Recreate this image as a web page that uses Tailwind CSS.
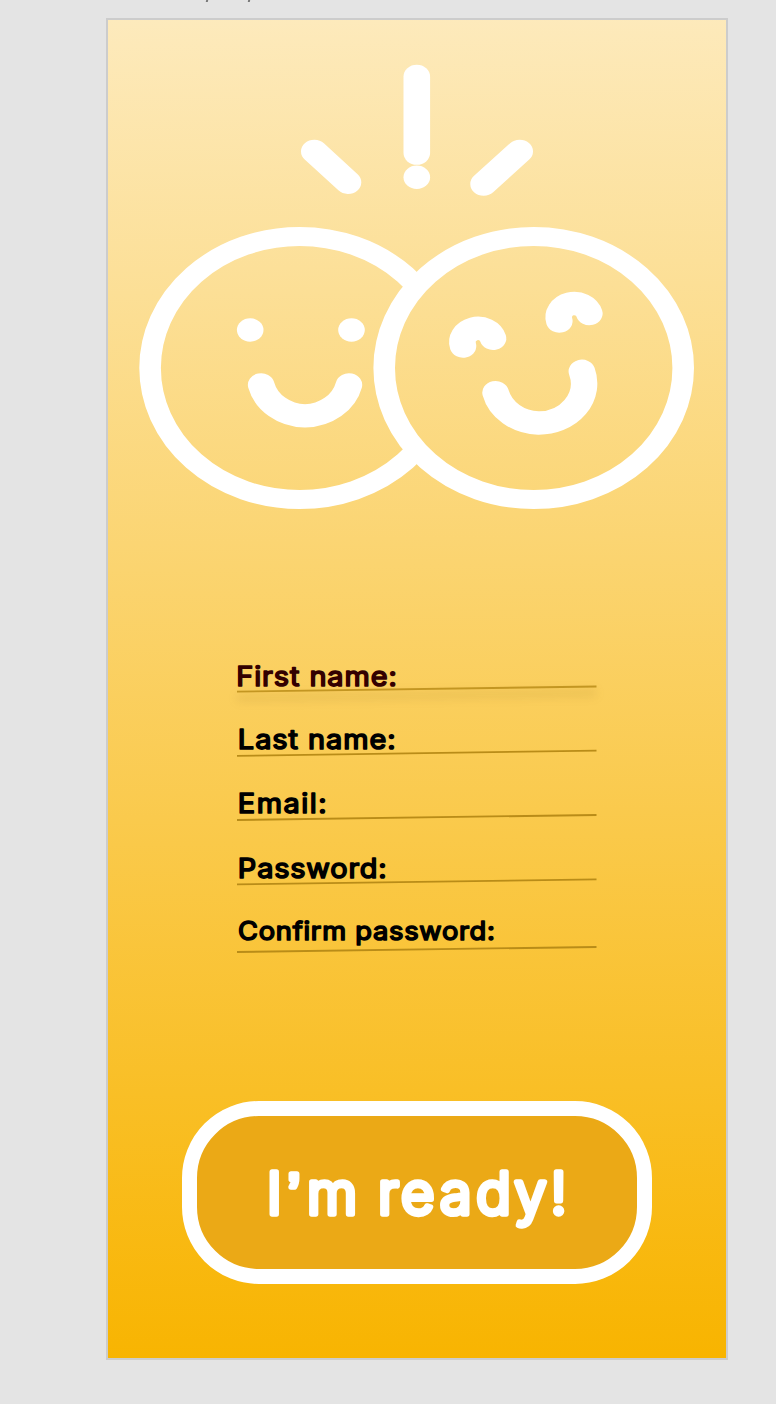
<!DOCTYPE html>
<html lang="en">
<head>
<meta charset="utf-8">
<title>Sign up</title>
<script src="https://cdn.jsdelivr.net/npm/@tailwindcss/browser@4"></script>
</head>
<body class="bg-[#e4e4e4] h-[1404px] overflow-hidden font-['Inter','Liberation_Sans',sans-serif]">
<div class="flex h-[18px] pl-[206px] gap-[40px]">
  <span class="h-[2px] w-[2px] -skew-x-12 bg-[#777]"></span>
  <span class="h-[2px] w-[2px] -skew-x-12 bg-[#777]"></span>
</div>
<main class="ml-[106px] flex h-[1342px] w-[622px] flex-col border-2 border-[#cccccc] bg-[linear-gradient(179deg,#fdeabc,#f8b400)]">
  <svg class="block h-[500px] w-[618px] shrink-0" viewBox="108 20 618 500" fill="none" stroke="#fff" stroke-linecap="round" stroke-width="26.6">
    <mask id="behind" maskUnits="userSpaceOnUse" x="100" y="200" width="620" height="420">
      <rect x="100" y="200" width="620" height="420" fill="#fff" stroke="none"/>
      <circle cx="533.5" cy="418.2" r="149.5" fill="#000" stroke="none"/>
    </mask>
    <g transform="scale(1 .88)">
      <path d="M416.8 86.9V174"/>
      <circle cx="416.8" cy="201.5" r="13.3" fill="#fff" stroke="none"/>
      <path d="M314.3 172L348 207.1M519.7 172L483.6 209.1"/>
      <circle cx="299.6" cy="418.2" r="149.5" stroke-width="21.6" mask="url(#behind)"/>
      <circle cx="533.7" cy="418.2" r="149.5" stroke-width="21.6"/>
      <g fill="#fff" stroke="none"><circle cx="250.2" cy="375" r="13.3"/><circle cx="351.5" cy="375" r="13.3"/></g>
      <path d="M261.2 437.4A46.2 46.2 0 0 0 305 472.6A46.2 46.2 0 0 0 348.9 437.4"/>
      <path d="M463 393.2A15.5 15.5 0 1 1 493 384.4"/>
      <path d="M559.3 364.9A15.5 15.5 0 1 1 589.3 356.3"/>
      <path d="M495.6 446.2A45.4 45.4 0 0 0 538.3 480.7A45 45 0 0 0 581.9 422"/>
    </g>
  </svg>
  <form class="ml-[129px] mt-[135px] flex w-[360px] flex-col" aria-label="Sign up">
    <svg class="block h-16 w-full overflow-visible" viewBox="0 0 360 64" font-size="27">
      <path d="M0 43L359 38" stroke="#7a5a10" stroke-opacity=".1" stroke-width="8" style="filter:blur(4px)"/>
      <path d="M0 36.6L359.5 31.5" stroke="#c39622" stroke-width="1.8"/>
      <text transform="scale(1.07 1)" x="-.7" y="30.8" textLength="150" fill="#330000" stroke="#330000" stroke-width="1.6" stroke-linejoin="round">First name:</text>
    </svg>
    <svg class="block h-16 w-full overflow-visible" viewBox="0 0 360 64" font-size="27">
      <path d="M0 36.8L359.5 31.7" stroke="#b98c18" stroke-width="1.8"/>
      <text transform="scale(1.07 1)" x="0.8" y="30.5" textLength="147.5" stroke="#000" stroke-width="1.6" stroke-linejoin="round">Last name:</text>
    </svg>
    <svg class="block h-16 w-full overflow-visible" viewBox="0 0 360 64" font-size="27">
      <path d="M0 37L359.5 32" stroke="#b98c18" stroke-width="1.8"/>
      <text transform="scale(1.07 1)" x="0.8" y="30.5" textLength="83" stroke="#000" stroke-width="1.6" stroke-linejoin="round">Email:</text>
    </svg>
    <svg class="block h-16 w-full overflow-visible" viewBox="0 0 360 64" font-size="27">
      <path d="M0 37.3L359.5 32.4" stroke="#b98c18" stroke-width="1.8"/>
      <text transform="scale(1.07 1)" x="0.8" y="31.3" textLength="139" stroke="#000" stroke-width="1.6" stroke-linejoin="round">Password:</text>
    </svg>
    <svg class="block h-16 w-full overflow-visible" viewBox="0 0 360 64" font-size="25.5">
      <path d="M0 41L359.5 36" stroke="#b98c18" stroke-width="1.8"/>
      <text transform="scale(1.07 1)" x="1" y="29.2" textLength="240" stroke="#000" stroke-width="1.6" stroke-linejoin="round">Confirm password:</text>
    </svg>
  </form>
  <button class="ml-[74px] mt-[126px] flex h-[183px] w-[470px] shrink-0 items-center justify-center rounded-[77px] border-[15px] border-white bg-[#eba916]">
    <svg class="block h-[100px] w-[320px] overflow-visible" viewBox="257 1143 320 100">
      <text class="font-light" y="1214" x="266.7 287.5 307 342 378 401 440 476.3 514.5 550.5" font-size="57.5" fill="#fff" stroke="#fff" stroke-width="5.4" stroke-linejoin="round">I<tspan class="font-['Liberation_Sans',sans-serif]">’</tspan>m ready!</text>
    </svg>
  </button>
</main>
</body>
</html>
